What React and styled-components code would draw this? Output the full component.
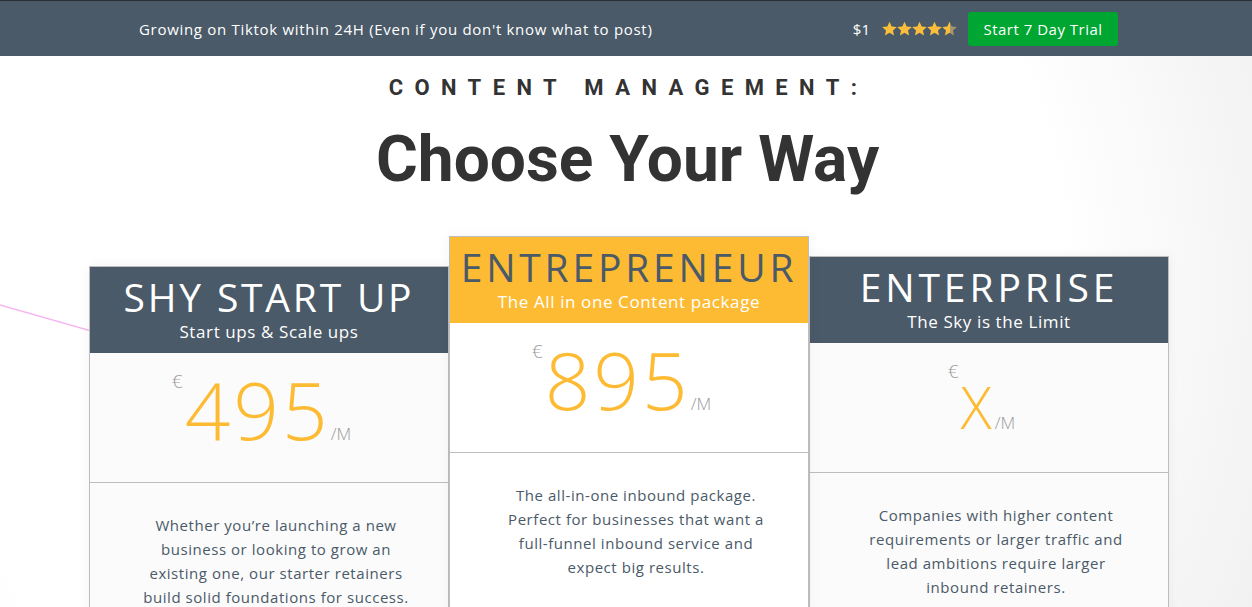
import React from "react";
import styled, { createGlobalStyle } from "styled-components";

const GlobalStyle = createGlobalStyle`
  * { box-sizing: border-box; }
  body {
    margin: 0;
    font-family: "Open Sans", "Liberation Sans", sans-serif;
    background: #fff;
  }
`;

const colors = {
  slate: "#4a5a68",
  yellow: "#fdbb34",
  green: "#00a632",
  muted: "#9a9a9a",
  line: "#bdbdbd",
};

const TopBar = styled.div`
  height: 56px;
  background: ${colors.slate};
  border-top: 1px solid #2a2e33;
`;

const TopBarInner = styled.div`
  width: 979px;
  height: 100%;
  margin-left: calc(50% - 487px);
  display: flex;
  align-items: center;
  justify-content: space-between;
  color: #fff;
  font-size: 15px;
  letter-spacing: 0.7px;
`;

const Offer = styled.div`
  display: flex;
  align-items: center;
`;

const PriceTag = styled.span`
  margin-right: 12px;
  letter-spacing: 0;
`;

const Stars = styled.div`
  display: flex;
  margin-right: 11px;
`;

const TrialButton = styled.a`
  display: flex;
  align-items: center;
  justify-content: center;
  width: 150px;
  height: 34px;
  background: ${colors.green};
  border-radius: 3px;
  color: #fff;
  text-decoration: none;
  font-size: 15px;
  letter-spacing: 0.5px;
`;

const Section = styled.section`
  position: relative;
  overflow: hidden;
  min-height: 551px;
  background: radial-gradient(circle at 40% 40%, #fff 68%, #f0f0f0 100%);
`;

const Decor = styled.svg`
  position: absolute;
  left: 0;
  top: 0;
  z-index: 0;
`;

const Heading = styled.div`
  position: relative;
  z-index: 1;
  text-align: center;
  font-family: Roboto, "Liberation Sans", sans-serif;
  color: #333;
`;

const Eyebrow = styled.div`
  margin-top: 17px;
  font-size: 22px;
  line-height: 30px;
  font-weight: 700;
  letter-spacing: 11.4px;
  padding-left: 5px;
`;

const Title = styled.h1`
  margin: 17px 0 0;
  font-size: 64px;
  line-height: 80px;
  font-weight: 700;
  padding-left: 3px;
`;

const Plans = styled.div`
  position: relative;
  z-index: 1;
  display: flex;
  align-items: flex-start;
  width: 1080px;
  margin: 36px 0 0 89px;
`;

const Card = styled.div`
  width: 360px;
  flex-shrink: 0;
  margin-top: ${({ $offset }) => $offset}px;
  border: 1px solid ${colors.line};
  background: ${({ $featured }) => ($featured ? "#fff" : "#fbfbfb")};
  box-shadow: 0 0 12px rgba(0, 0, 0, 0.05);
  z-index: ${({ $featured }) => ($featured ? 2 : 1)};
`;

const CardHeader = styled.div`
  height: 86px;
  padding-top: 8px;
  text-align: center;
  background: ${({ $featured }) => ($featured ? colors.yellow : colors.slate)};
`;

const PlanName = styled.div`
  font-size: 39px;
  line-height: 44px;
  letter-spacing: ${({ $spacing }) => $spacing}px;
  color: ${({ $featured }) => ($featured ? colors.slate : "#fff")};
`;

const PlanTagline = styled.div`
  margin-top: 2px;
  font-size: 17px;
  line-height: 22px;
  letter-spacing: 0.6px;
  color: #fff;
`;

const PriceBox = styled.div`
  height: 130px;
  display: flex;
  justify-content: center;
  align-items: baseline;
  padding-right: 15px;
  border-top: 1px solid transparent;
  border-bottom: 1px solid ${colors.line};
`;

const Currency = styled.span`
  align-self: flex-start;
  margin-top: 18px;
  margin-right: 2px;
  font-size: 19px;
  line-height: 1;
  font-weight: 300;
  color: ${colors.muted};
`;

const Amount = styled.span`
  margin-top: ${({ $size }) => 86 - 0.888 * $size}px;
  font-size: ${({ $size }) => $size}px;
  line-height: 1;
  font-weight: 300;
  letter-spacing: 3px;
  color: ${colors.yellow};
`;

const Per = styled.span`
  font-size: 17px;
  line-height: 1;
  font-weight: 300;
  color: ${colors.muted};
`;

const Description = styled.p`
  margin: 0;
  min-height: 160px;
  padding: 30px 8px 0 22px;
  text-align: center;
  font-size: 15px;
  line-height: 24px;
  font-weight: 500;
  letter-spacing: 0.55px;
  color: ${colors.slate};
`;

const Star = ({ half }) => (
  <svg width="15" height="15" viewBox="1 1 22 21">
    <defs>
      <linearGradient id="halfstar">
        <stop offset="55%" stopColor="#fcbd3a" />
        <stop offset="55%" stopColor="#a8976a" />
      </linearGradient>
    </defs>
    <path
      d="M12 1.5l3.2 6.9 7.5.8-5.6 5.1 1.6 7.4L12 17.9l-6.7 3.8 1.6-7.4-5.6-5.1 7.5-.8z"
      fill={half ? "url(#halfstar)" : "#fcbd3a"}
    />
  </svg>
);

const plans = [
  {
    name: "SHY START UP",
    tagline: "Start ups & Scale ups",
    amount: "495",
    size: 80,
    offset: 30,
    spacing: 2.8,
    lines: [
      "Whether you’re launching a new",
      "business or looking to grow an",
      "existing one, our starter retainers",
      "build solid foundations for success.",
    ],
  },
  {
    name: "ENTREPRENEUR",
    tagline: "The All in one Content package",
    amount: "895",
    size: 80,
    offset: 0,
    featured: true,
    spacing: 3.8,
    lines: [
      "The all-in-one inbound package.",
      "Perfect for businesses that want a",
      "full-funnel inbound service and",
      "expect big results.",
    ],
  },
  {
    name: "ENTERPRISE",
    tagline: "The Sky is the Limit",
    amount: "X",
    size: 58,
    offset: 20,
    spacing: 3.9,
    lines: [
      "Companies with higher content",
      "requirements or larger traffic and",
      "lead ambitions require larger",
      "inbound retainers.",
    ],
  },
];

const App = () => (
  <>
    <GlobalStyle />
    <TopBar>
      <TopBarInner>
        <span>Growing on Tiktok within 24H (Even if you don't know what to post)</span>
        <Offer>
          <PriceTag>$1</PriceTag>
          <Stars>
            <Star />
            <Star />
            <Star />
            <Star />
            <Star half />
          </Stars>
          <TrialButton href="#">Start 7 Day Trial</TrialButton>
        </Offer>
      </TopBarInner>
    </TopBar>
    <Section>
      <Decor width="200" height="400">
        <line x1="0" y1="249" x2="200" y2="306" stroke="#f7b5f0" strokeWidth="1.4" />
      </Decor>
      <Heading>
        <Eyebrow>CONTENT MANAGEMENT:</Eyebrow>
        <Title>Choose Your Way</Title>
      </Heading>
      <Plans>
        {plans.map((p) => (
          <Card key={p.name} $offset={p.offset} $featured={p.featured}>
            <CardHeader $featured={p.featured}>
              <PlanName $featured={p.featured} $spacing={p.spacing}>
                {p.name}
              </PlanName>
              <PlanTagline>{p.tagline}</PlanTagline>
            </CardHeader>
            <PriceBox>
              <Currency>€</Currency>
              <Amount $size={p.size}>{p.amount}</Amount>
              <Per>/M</Per>
            </PriceBox>
            <Description>
              {p.lines.map((l, i) => (
                <React.Fragment key={i}>
                  {l}
                  {i < p.lines.length - 1 && <br />}
                </React.Fragment>
              ))}
            </Description>
          </Card>
        ))}
      </Plans>
    </Section>
  </>
);

export default App;
